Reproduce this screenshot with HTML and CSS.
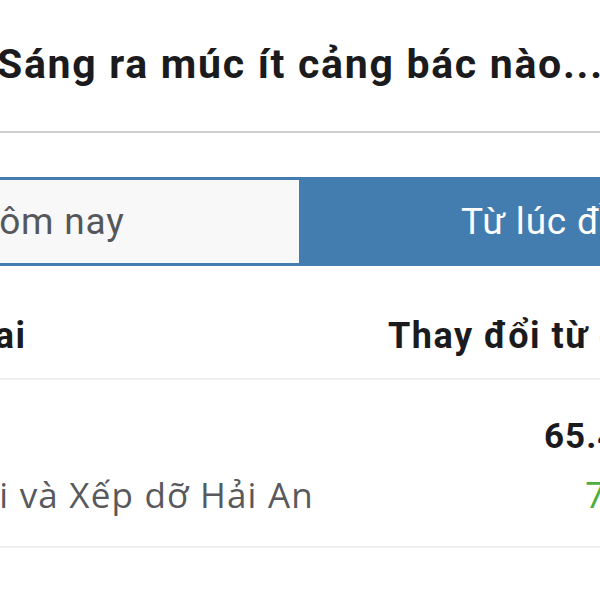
FILE: index.html
```html
<!DOCTYPE html>
<html lang="vi">
<head>
  <meta charset="UTF-8" />
  <meta name="viewport" content="width=device-width, initial-scale=1.0"/>
  <title>Sáng ra múc ít cảng bác nào...</title>
  <link rel="stylesheet" href="styles.css">
</head>

<body>
  <div class="screen">

    <header class="title-bar">
      <h1 class="title">Sáng ra múc ít cảng bác nào...</h1>
    </header>

    <div class="tabs">
      <div class="tab tab-idle">Hôm nay</div>
      <div class="tab tab-active">Từ lúc đầu tư</div>
    </div>

    <div class="row row-head">
      <div class="cell-name"><span class="head-name">Loai</span></div>
      <div class="cell-change"><span class="head-change">Thay đổi từ đầu</span></div>
    </div>

    <div class="row row-item">
      <div class="cell-name">
        <div class="ticker">HAH</div>
        <div class="company">tải và Xếp dỡ Hải An</div>
      </div>
      <div class="cell-change">
        <div class="price">65.400</div>
        <div class="gain">7,4%</div>
      </div>
    </div>

  </div>
</body>
</html>
```

FILE: styles.css
```css
body {
  margin: 0;
  background: #fff;
  font-family: 'Roboto', 'Noto Sans', sans-serif;
}
.screen {
  width: 600px;
  height: 600px;
  overflow: hidden;
  background: #fff;
}
.title-bar {
  height: 133px;
  box-sizing: border-box;
  padding-top: 40px;
  border-bottom: 2px solid #cfcfd1;
}
.title {
  margin: 0 0 0 -3px;
  font-size: 41px;
  font-weight: 700;
  line-height: 48px;
  letter-spacing: 1.7px;
  color: #1b1b1d;
  white-space: nowrap;
}
.tabs {
  display: flex;
  height: 89px;
  margin-top: 44px;
  margin-left: -60px;
}
.tab {
  display: flex;
  align-items: center;
  box-sizing: border-box;
  font-size: 37px;
  letter-spacing: 0.8px;
  white-space: nowrap;
  flex: none;
}
.tab-idle {
  width: 362px;
  padding-left: 32px;
  background: #f8f8f9;
  color: #55575b;
  border: 3px solid #437db0;
  border-left: none;
}
.tab-active {
  width: 400px;
  padding-left: 159px;
  background: #437db0;
  color: #fff;
}
.row {
  display: flex;
  border-bottom: 2px solid #efefef;
  white-space: nowrap;
}
.cell-name {
  width: 388px;
  flex: none;
}
.cell-change {
  flex: none;
}
.row-head {
  height: 114px;
  box-sizing: border-box;
  padding-top: 28px;
  align-items: center;
  font-size: 36px;
  font-weight: 700;
  letter-spacing: 1.5px;
  color: #1b1b1d;
}
.head-name {
  display: block;
  margin-left: -48px;
}
.row-item {
  height: 168px;
  box-sizing: border-box;
  padding-top: 32px;
}
.ticker {
  height: 58px;
  margin-left: -120px;
  font-size: 35px;
  font-weight: 700;
}
.company {
  margin-left: -35px;
  font-family: 'Open Sans', 'Noto Sans', sans-serif;
  font-size: 35px;
  line-height: 50px;
  letter-spacing: 1.2px;
  color: #58595c;
}
.price {
  height: 58px;
  margin-left: 156px;
  font-size: 35px;
  font-weight: 700;
  line-height: 50px;
  letter-spacing: 1px;
  color: #1b1b1d;
}
.gain {
  margin-left: 197px;
  font-family: 'Open Sans', 'Noto Sans', sans-serif;
  font-size: 36px;
  line-height: 50px;
  color: #4cae3f;
}
```
